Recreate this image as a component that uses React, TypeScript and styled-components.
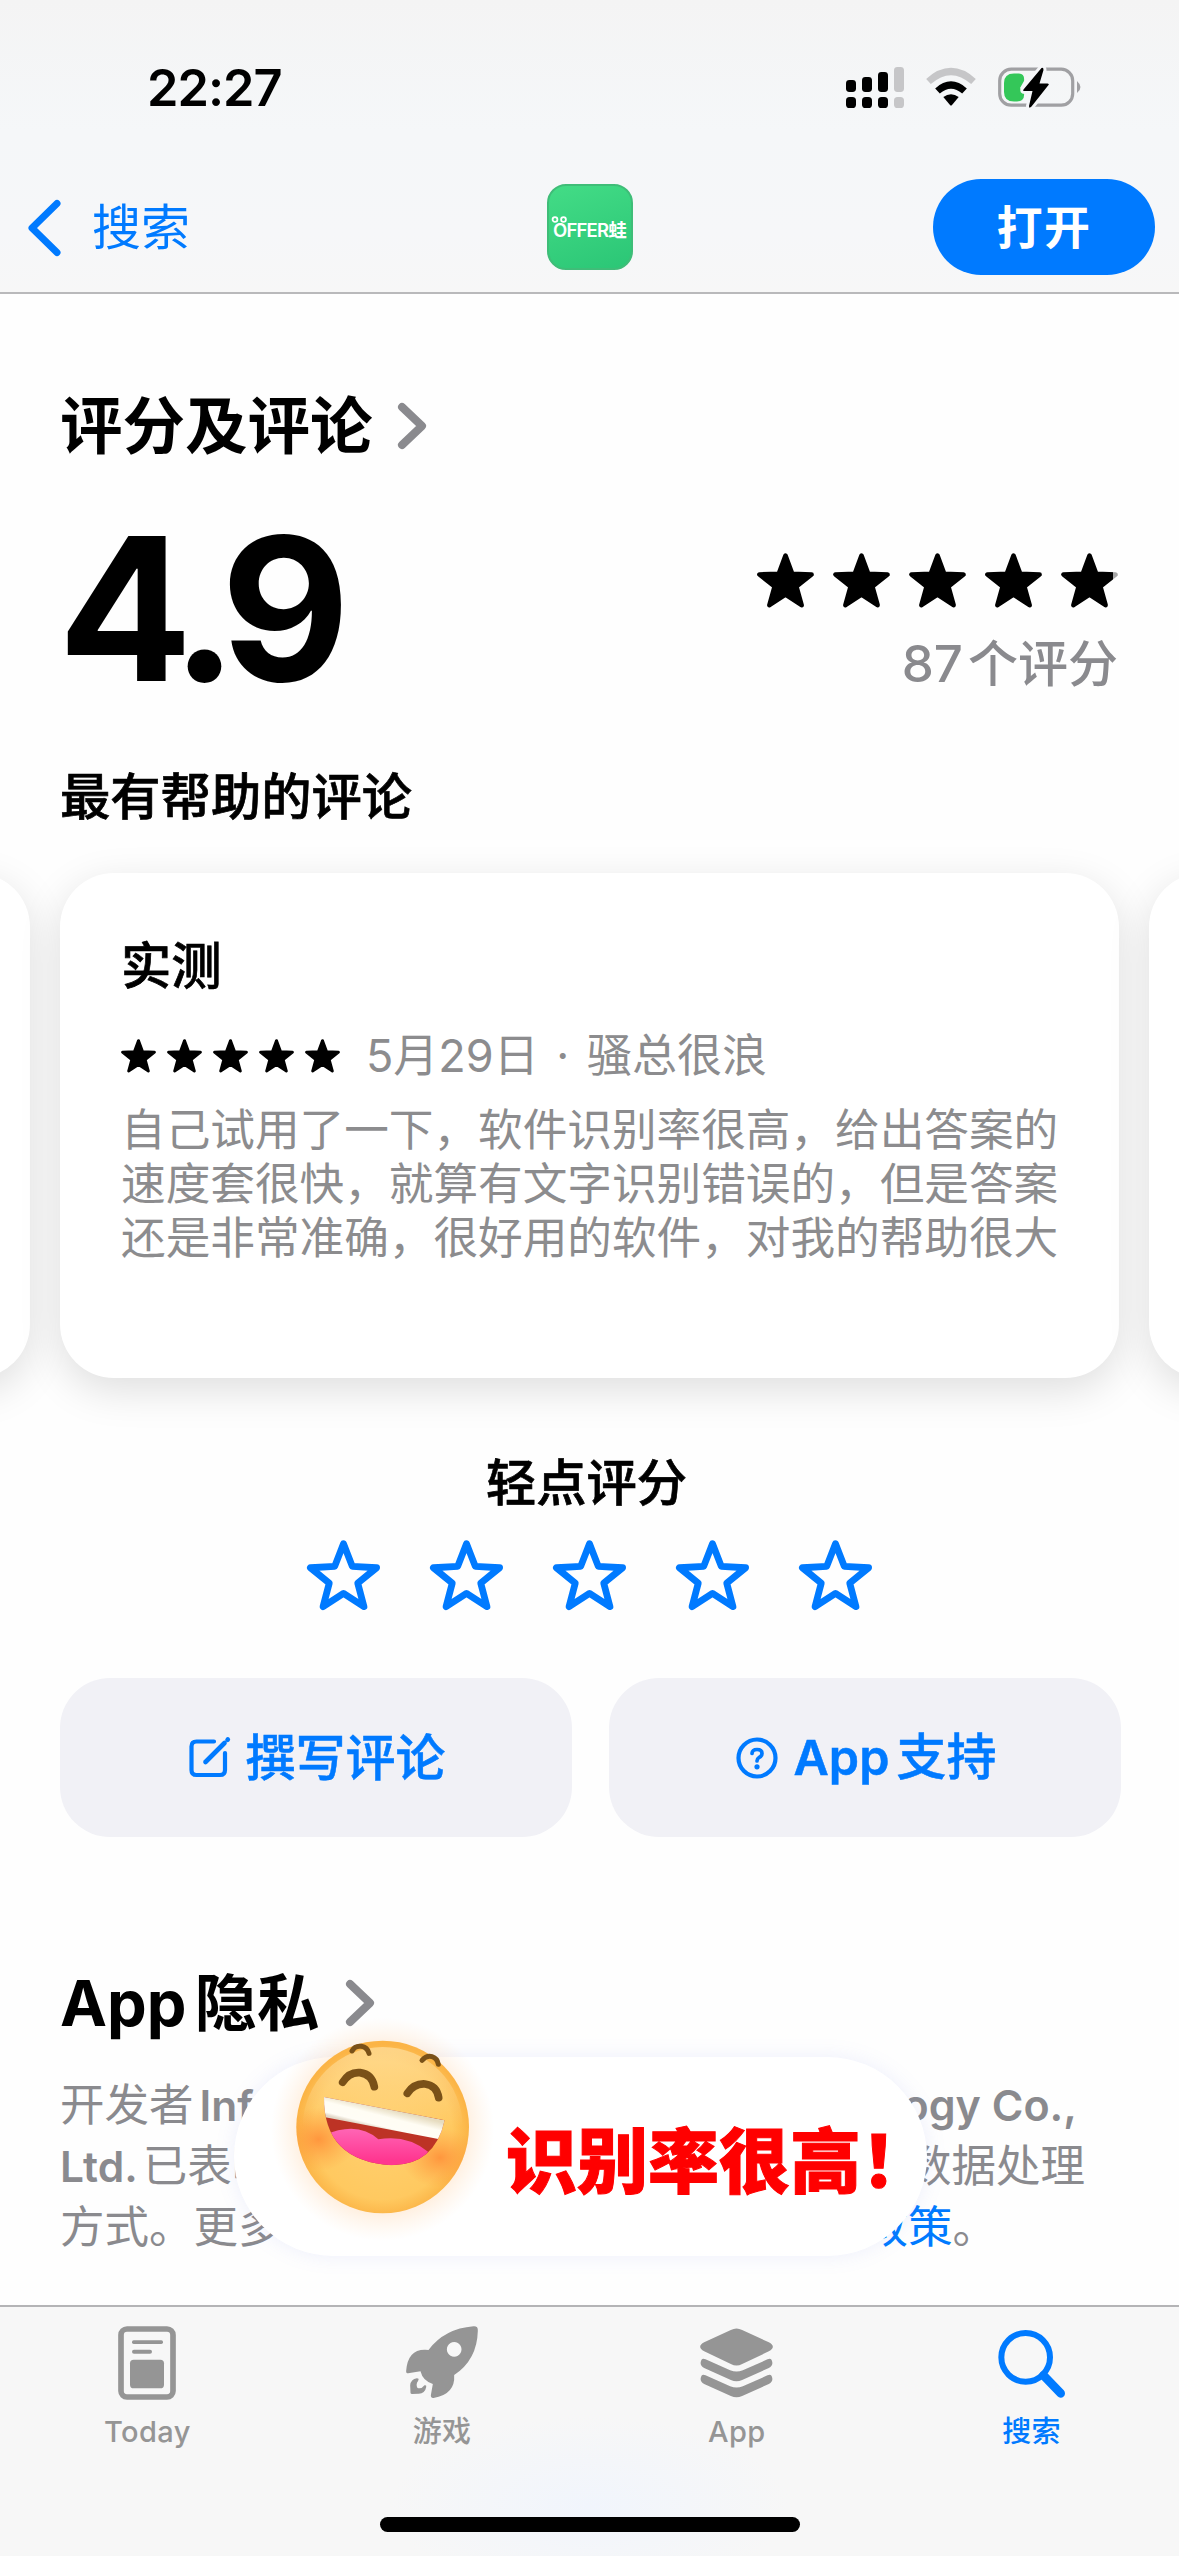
import React from "react";
import styled, { createGlobalStyle } from "styled-components";

const BLUE = "#007aff";
const GRAY = "#8a8a8e";
const TAB_GRAY = "#959595";

const GlobalStyle = createGlobalStyle`
  html, body { margin: 0; padding: 0; background: #fff; }
  * { box-sizing: border-box; }
  svg { display: block; flex: none; overflow: visible; }
  button { border: 0; padding: 0; margin: 0; background: none; font: inherit; color: inherit; }
  h2, h3, p { margin: 0; font-weight: inherit; }
`;

const Screen = styled.div`
  width: 1179px;
  height: 2556px;
  display: flex;
  flex-direction: column;
  overflow: hidden;
  background: #fefefe;
  color: #000;
  font-family: Inter, "Noto Sans CJK SC", sans-serif;
  white-space: nowrap;
`;

const Header = styled.header`
  flex: none;
  height: 294px;
  display: flex;
  flex-direction: column;
  background: linear-gradient(#f4f4f4, #f5f7f9 45%, #f6f7f9 80%, #f7f7f7);
  border-bottom: 2px solid #b9b9bb;
`;

const StatusBar = styled.div`
  height: 176px;
  display: flex;
  justify-content: space-between;
  padding: 0 98px 0 147px;
`;

const Clock = styled.time`
  line-height: 176px;
  font-size: 50.5px;
  font-weight: 600;
  letter-spacing: -1px;
`;

const StatusIcons = styled.div`
  display: flex;
  align-items: flex-start;
  padding-top: 66px;
  gap: 22px;
`;

const NavBar = styled.nav`
  height: 102px;
  display: grid;
  grid-template-columns: 1fr 86px 1fr;
  align-items: center;
`;

const BackLink = styled.button`
  display: flex;
  align-items: center;
  gap: 31px;
  padding: 1px 0 0 28px;
  color: ${BLUE};
  font-size: 49px;
  line-height: 60px;
`;

const AppIcon = styled.div`
  position: relative;
  width: 86px;
  height: 86px;
  border-radius: 19px;
  border: 2px solid #3fbd78;
  background: linear-gradient(160deg, #43dc86, #2bc676);
  display: flex;
  align-items: center;
  justify-content: center;
  padding-top: 5px;
  color: #fff;
  font-size: 18.5px;
  font-weight: 600;
  line-height: 20px;
  letter-spacing: -0.8px;
`;

const FrogEyes = styled.svg`
  position: absolute;
  left: 2px;
  top: 29px;
`;

const OpenButton = styled.button`
  justify-self: end;
  margin-right: 24px;
  width: 222px;
  height: 96px;
  border-radius: 48px;
  background: ${BLUE};
  color: #fff;
  font-size: 46px;
  font-weight: 600;
  line-height: 97px;
  letter-spacing: 1.5px;
`;

const Content = styled.main`
  flex: 1;
  min-height: 0;
  display: flex;
  flex-direction: column;
  padding: 84px 60px 0;
`;

const SectionTitle = styled.h2<{ $gap: number }>`
  height: 96px;
  display: flex;
  align-items: center;
  gap: ${(p) => p.$gap}px;
  font-size: 62.5px;
  font-weight: 700;
  line-height: 96px;
`;

const Latin = styled.span<{ $size: number; $gap: number; $weight?: number; $before?: number }>`
  font-size: ${(p) => p.$size}px;
  font-weight: ${(p) => p.$weight ?? 600};
  margin-left: ${(p) => p.$before ?? 0}px;
  margin-right: ${(p) => p.$gap}px;
`;

const Summary = styled.section`
  height: 292px;
  display: flex;
  justify-content: space-between;
`;

const Score = styled.div`
  margin-left: -2px;
  padding-top: 15px;
  font-size: 199px;
  font-weight: 700;
  line-height: 240px;
  letter-spacing: -14.5px;
`;

const Tally = styled.div`
  padding: 79px 1px 0 0;
  display: flex;
  flex-direction: column;
  align-items: flex-end;
  gap: 24px;
  color: ${GRAY};
  font-size: 50px;
  font-weight: 500;
  line-height: 60px;
`;

const StarRow = styled.div<{ $gap: number }>`
  display: flex;
  justify-content: center;
  gap: ${(p) => p.$gap}px;
`;

const Heading = styled.h3<{ $center?: boolean }>`
  height: 60px;
  padding-top: 1px;
  padding-right: ${(p) => (p.$center ? 6 : 0)}px;
  font-size: 50.3px;
  font-weight: 500;
  line-height: 60px;
  text-align: ${(p) => (p.$center ? "center" : "left")};
  -webkit-text-stroke: 0.7px #000;
`;

const Carousel = styled.section`
  margin: 47px -60px 0;
  display: flex;
  justify-content: center;
  gap: 30px;
`;

const ReviewCard = styled.article`
  flex: none;
  width: 1059px;
  height: 505px;
  border-radius: 54px;
  background: #fff;
  box-shadow: 0 12px 42px rgba(0, 0, 0, 0.13);
  padding: 62px 60px 0 61px;
`;

const ReviewMeta = styled.div`
  height: 54px;
  margin: 34px 0 20px;
  display: flex;
  align-items: center;
  gap: 26px;
  font-size: 45px;
  line-height: 54px;
  word-spacing: 5px;
  color: #8c8c8e;
`;

const ReviewBody = styled.p`
  font-size: 44.64px;
  line-height: 54px;
  color: #8c8c8e;
`;

const TapToRate = styled.section`
  margin-top: 74px;
  display: flex;
  flex-direction: column;
  gap: 28px;
`;

const Actions = styled.div`
  margin: 66px -2px 0 0;
  display: grid;
  grid-template-columns: 1fr 1fr;
  gap: 37px;
`;

const ActionButton = styled.button`
  height: 159px;
  border-radius: 50px;
  background: #f1f1f6;
  color: ${BLUE};
  display: flex;
  align-items: center;
  justify-content: center;
  gap: 16px;
  padding-left: 2px;
  font-size: 50px;
  font-weight: 500;
  line-height: 60px;
  -webkit-text-stroke: 0.5px ${BLUE};
`;

const Privacy = styled.section`
  position: relative;
  margin-top: 118px;
`;

const PolicyText = styled.div`
  margin-top: 24px;
  width: 1025px;
  color: ${GRAY};
  font-size: 44.5px;
  line-height: 60px;
`;

const PolicyLine = styled.div<{ $inset?: number }>`
  display: flex;
  justify-content: space-between;
  padding-right: ${(p) => p.$inset ?? 0}px;
`;

const PolicyLink = styled.span`
  color: ${BLUE};
`;

const Toast = styled.aside`
  position: absolute;
  left: 174px;
  top: 102px;
  width: 693px;
  height: 199px;
  border-radius: 100px;
  background: #fff;
  box-shadow: 0 0 20px rgba(120, 140, 230, 0.13);
  display: flex;
  align-items: center;
  color: #ff0000;
  font-family: "Noto Sans CJK SC", sans-serif;
  font-size: 71px;
  font-weight: 900;
  line-height: 90px;
`;

const ToastFace = styled.svg`
  margin: -62px 0 0 36px;
`;

const ToastLabel = styled.span`
  margin: -2px 0 0 6px;
  -webkit-text-stroke: 1px #ff0000;
  font-feature-settings: "halt";
`;

const TabBar = styled.footer`
  flex: none;
  height: 251px;
  border-top: 2px solid #b4b4b6;
  background: radial-gradient(ellipse 200px 90px at 50% 80%, #f1f5fc, #f7f7f7);
  display: flex;
  flex-direction: column;
  align-items: center;
`;

const Tabs = styled.div`
  width: 1179px;
  height: 210px;
  display: grid;
  grid-template-columns: repeat(4, 1fr);
`;

const Tab = styled.button<{ $active?: boolean }>`
  display: flex;
  flex-direction: column;
  align-items: center;
  justify-content: flex-start;
  padding-top: 19px;
  gap: 14px;
  color: ${(p) => (p.$active ? BLUE : TAB_GRAY)};
  font-size: 29px;
  font-weight: 500;
  line-height: 36px;
  letter-spacing: 0.4px;
`;

const HomeIndicator = styled.div`
  width: 420px;
  height: 15px;
  border-radius: 8px;
  background: #000;
`;

function starPoints(cx: number, cy: number, r: number, ratio: number) {
  return Array.from({ length: 10 }, (_, i) => {
    const a = (Math.PI / 5) * i - Math.PI / 2;
    const d = i % 2 ? r * ratio : r;
    return `${(cx + d * Math.cos(a)).toFixed(2)},${(cy + d * Math.sin(a)).toFixed(2)}`;
  }).join(" ");
}

function SolidStar({ size, partial }: { size: number; partial?: boolean }) {
  const fill = partial ? "url(#partial-star)" : "#000";
  return (
    <svg width={size} height={size} viewBox="0 0 57 57">
      <defs>
        <linearGradient id="partial-star" gradientUnits="userSpaceOnUse" x1="0" x2="57" y1="0" y2="0">
          <stop offset="0.92" stopColor="#000" />
          <stop offset="0.92" stopColor="#a5a5a5" />
        </linearGradient>
      </defs>
      <polygon points={starPoints(28.5, 30, 27.4, 0.42)} fill={fill} stroke={fill} strokeWidth="4.6" strokeLinejoin="round" />
    </svg>
  );
}

function OutlineStar() {
  return (
    <svg width="73" height="72" viewBox="0 0 73 72">
      <polygon points={starPoints(36.5, 38.5, 34.8, 0.43)} fill="none" stroke={BLUE} strokeWidth="6.8" strokeLinejoin="round" />
    </svg>
  );
}

function Chevron() {
  return (
    <svg width="30" height="48" viewBox="0 0 30 48" fill="none" stroke={GRAY} strokeWidth="8" strokeLinecap="round" strokeLinejoin="round">
      <path d="M5 5 L25 24 L5 43" />
    </svg>
  );
}

function BackChevron() {
  return (
    <svg width="33" height="58" viewBox="0 0 33 58" fill="none" stroke={BLUE} strokeWidth="7" strokeLinecap="round" strokeLinejoin="round">
      <path d="M29 4.5 L4 29 L29 53.5" />
    </svg>
  );
}

function Signal() {
  const bars = [14, 11, 6, 1];
  return (
    <svg width="58" height="42" viewBox="0 0 58 42">
      {bars.map((top, i) => (
        <g key={top} fill={i === 3 ? "#c6c6c8" : "#000"}>
          <rect x={i * 16} y={top} width="10" height={26 - top} rx="3.4" />
          <rect x={i * 16} y="31" width="10" height="11" rx="3.6" />
        </g>
      ))}
    </svg>
  );
}

function Wifi() {
  return (
    <svg width="50" height="40" viewBox="0 0 50 40" fill="none">
      <path d="M2.5 15.5 Q25 -4.5 47.5 15.5" stroke="#c6c6c8" strokeWidth="7" />
      <path d="M11.5 25 Q25 13 38.5 25" stroke="#000" strokeWidth="7" />
      <path d="M17.3 31 Q25 25.5 32.7 31 L26 39 Q25 40 24 39 Z" fill="#000" />
    </svg>
  );
}

function Battery() {
  return (
    <svg width="83" height="42" viewBox="0 0 83 42">
      <rect x="1.7" y="3.2" width="73" height="36" rx="11.5" fill="none" stroke="#a0a0a3" strokeWidth="3.2" />
      <path d="M16 7.500 H21 Q27 8 26 15 L22 22 L26 27 Q27 35 19 35.500 H16 Q6 35.500 6 26 V17 Q6 7.500 16 7.500Z" fill="#34c759" />
      <path d="M79 15 Q86 21.500 79 27Z" fill="#a0a0a3" />
      <path d="M43.500 2 L25.500 23.500 Q24.500 25 26.500 25 H34.500 L31 40 Q31 43 33.500 40.500 L50.500 19 Q51.500 17.500 49.500 17.500 H41.500 L45.500 4 Q45.500 1 43.500 2Z" fill="#000" stroke="#f5f6f8" strokeWidth="6" paintOrder="stroke" />
    </svg>
  );
}

function ComposeIcon() {
  return (
    <svg width="41" height="41" viewBox="0 0 41 41" fill="none" stroke={BLUE} strokeWidth="4.200" strokeLinecap="round" strokeLinejoin="round">
      <path d="M25 4.500 H7.500 Q2.500 4.500 2.500 9.500 V33 Q2.500 38 7.500 38 H31 Q36 38 36 33 V16" />
      <path d="M16.500 25 L35.500 6" strokeWidth="4.600" />
      <path d="M38.500 2.800 L38.800 2.500" strokeWidth="4.600" />
    </svg>
  );
}

function HelpIcon() {
  return (
    <svg width="42" height="42" viewBox="0 0 42 42" fill="none" stroke={BLUE} strokeWidth="4.200" strokeLinecap="round">
      <circle cx="21" cy="21" r="18.500" />
      <path d="M16 16.500 Q16.300 12.500 21 12.500 Q26 12.500 26 16.400 Q26 18.800 23.300 20.300 Q21 21.800 21 24" strokeWidth="3.700" />
      <circle cx="21" cy="29.800" r="2.600" fill={BLUE} stroke="none" />
    </svg>
  );
}

function TodayIcon() {
  return (
    <svg width="58" height="74" viewBox="0 0 174 222" fill={TAB_GRAY}>
      <rect x="9" y="9" width="156" height="204" rx="18" fill="none" stroke={TAB_GRAY} strokeWidth="17" />
      <rect x="42" y="43" width="93" height="11" rx="5" />
      <rect x="42" y="71" width="60" height="12" rx="6" />
      <rect x="36" y="101" width="102" height="86" rx="11" />
    </svg>
  );
}

function RocketIcon() {
  return (
    <svg width="73" height="74" viewBox="0 0 218 222" fill={TAB_GRAY}>
      <path
        fillRule="evenodd"
        d="M202 1 Q216 0 215 14 Q213 101 144 147 Q148 205 82 216 Q74 217 74 208 L80 174 Q50 165 43 136 L6 142 Q-1 142 0 134 Q5 70 57 71 Q66 71 67 72 Q115 8 202 1Z M144 48 a22 22 0 1 0 0.100 0Z"
      />
      <path d="M13 200 L12 178 Q14 160 32 157 Q40 157 36 164 Q28 174 34 186 Q46 190 55 178 Q62 176 60 184 Q56 204 36 203 L18 204 Q13 204 13 200Z" />
    </svg>
  );
}

function StackIcon() {
  const layer =
    "M4 95 Q8 90 16 94 L90 127 Q109 134 128 127 L202 94 Q210 90 214 95 Q222 112 206 120 L126 156 Q109 164 92 156 L12 120 Q-4 112 4 95Z";
  return (
    <svg width="73" height="74" viewBox="0 -6 218 222" fill={TAB_GRAY}>
      <path d="M92 6 Q109 -3 126 6 L206 43 Q230 56 206 70 L126 108 Q109 117 92 108 L12 70 Q-12 56 12 43Z" />
      <path d={layer} />
      <path d={layer} transform="translate(0 48)" />
    </svg>
  );
}

function SearchIcon() {
  return (
    <svg width="68" height="74" viewBox="0 -12 204 222" fill="none" stroke={BLUE} strokeLinecap="round">
      <circle cx="83" cy="82" r="73" strokeWidth="18" />
      <path d="M136 136 L188 190" strokeWidth="26" />
    </svg>
  );
}

function LaughingFace() {
  return (
    <ToastFace width="230" height="210" viewBox="0 0 690 630">
      <defs>
        <radialGradient id="face" cx="0.5" cy="0.52" r="0.5">
          <stop offset="0" stopColor="#ffd070" />
          <stop offset="0.8" stopColor="#ffc960" />
          <stop offset="1" stopColor="#fbb446" />
        </radialGradient>
        <linearGradient id="shine" x1="0" x2="0" y1="0" y2="1">
          <stop offset="0" stopColor="#ffe0a0" stopOpacity="0.7" />
          <stop offset="0.5" stopColor="#ffe0a0" stopOpacity="0" />
        </linearGradient>
        <radialGradient id="blush">
          <stop offset="0" stopColor="#ff8a35" stopOpacity="0.8" />
          <stop offset="1" stopColor="#ff9a3c" stopOpacity="0" />
        </radialGradient>
        <radialGradient id="glow">
          <stop offset="0.68" stopColor="#ffb870" stopOpacity="0.3" />
          <stop offset="1" stopColor="#ffd0a0" stopOpacity="0" />
        </radialGradient>
        <linearGradient id="teeth" gradientUnits="userSpaceOnUse" x1="350" y1="262" x2="334" y2="325">
          <stop offset="0" stopColor="#e6dcc0" />
          <stop offset="0.4" stopColor="#fffdf4" />
          <stop offset="0.85" stopColor="#fffdf6" />
          <stop offset="1" stopColor="#e2d8c8" />
        </linearGradient>
        <linearGradient id="tongue" x1="0" x2="0" y1="0" y2="1">
          <stop offset="0" stopColor="#ff65b5" />
          <stop offset="0.75" stopColor="#ff3690" />
        </linearGradient>
        <clipPath id="disc">
          <circle cx="338" cy="318" r="259" />
        </clipPath>
        <clipPath id="mouth">
          <path d="M162 228 L524 298 Q494 432 365 433 Q160 420 162 228Z" />
        </clipPath>
      </defs>
      <circle cx="338" cy="325" r="335" fill="url(#glow)" />
      <circle cx="338" cy="318" r="259" fill="url(#face)" />
      <circle cx="338" cy="318" r="240" fill="url(#shine)" />
      <g clipPath="url(#disc)">
        <ellipse cx="145" cy="355" rx="115" ry="95" fill="url(#blush)" />
        <ellipse cx="510" cy="410" rx="115" ry="90" fill="url(#blush)" />
      </g>
      <g clipPath="url(#mouth)">
        <rect x="150" y="220" width="390" height="220" fill="#bd3325" />
        <path d="M150 348 Q260 295 325 355 Q410 340 474 392 L450 450 H200Z" fill="url(#tongue)" />
        <path d="M155 220 L535 300 L505 354 L155 287Z" fill="url(#teeth)" />
      </g>
      <g fill="none" stroke="#7a5118" strokeLinecap="round">
        <path d="M218 184 Q238 152 270 155 Q306 160 313 197" strokeWidth="23" />
        <path d="M412 217 Q432 187 465 189 Q500 193 506 230" strokeWidth="23" />
        <path d="M246 90 Q255 73 274 76 Q292 79 297 97" strokeWidth="15" />
        <path d="M456 118 Q470 102 486 107 Q502 112 505 130" strokeWidth="15" />
      </g>
    </ToastFace>
  );
}

const reviewLines = [
  "自己试用了一下，软件识别率很高，给出答案的",
  "速度套很快，就算有文字识别错误的，但是答案",
  "还是非常准确，很好用的软件，对我的帮助很大",
];

const tabs = [
  { label: "Today", icon: <TodayIcon /> },
  { label: "游戏", icon: <RocketIcon /> },
  { label: "App", icon: <StackIcon /> },
  { label: "搜索", icon: <SearchIcon />, active: true },
];

const five = [0, 1, 2, 3, 4];

export default function App() {
  return (
    <Screen>
      <GlobalStyle />
      <Header>
        <StatusBar>
          <Clock>22:27</Clock>
          <StatusIcons>
            <Signal />
            <Wifi />
            <Battery />
          </StatusIcons>
        </StatusBar>
        <NavBar>
          <BackLink>
            <BackChevron />
            搜索
          </BackLink>
          <AppIcon>
            <FrogEyes width="16" height="9" viewBox="0 0 16 9" fill="none" stroke="#fff" strokeWidth="1.800">
              <circle cx="4" cy="4.500" r="2.400" />
              <circle cx="12.500" cy="4.500" r="2.400" />
            </FrogEyes>
            OFFER蛙
          </AppIcon>
          <OpenButton>打开</OpenButton>
        </NavBar>
      </Header>

      <Content>
        <SectionTitle $gap={24}>
          评分及评论
          <Chevron />
        </SectionTitle>
        <Summary>
          <Score>4.9</Score>
          <Tally>
            <StarRow $gap={19}>
              {five.map((i) => (
                <SolidStar key={i} size={57} partial={i === 4} />
              ))}
            </StarRow>
            <span>
              <Latin $size={51} $gap={5} $weight={500}>87</Latin>个评分
            </span>
          </Tally>
        </Summary>
        <Heading>最有帮助的评论</Heading>
        <Carousel>
          <ReviewCard />
          <ReviewCard>
            <Heading>实测</Heading>
            <ReviewMeta>
              <StarRow $gap={11}>
                {five.map((i) => (
                  <SolidStar key={i} size={35} />
                ))}
              </StarRow>
              <span>5月29日 · 骚总很浪</span>
            </ReviewMeta>
            <ReviewBody>
              {reviewLines.map((line) => (
                <React.Fragment key={line}>
                  {line}
                  <br />
                </React.Fragment>
              ))}
            </ReviewBody>
          </ReviewCard>
          <ReviewCard />
        </Carousel>

        <TapToRate>
          <Heading $center>轻点评分</Heading>
          <StarRow $gap={50}>
            {five.map((i) => (
              <OutlineStar key={i} />
            ))}
          </StarRow>
        </TapToRate>

        <Actions>
          <ActionButton>
            <ComposeIcon />
            撰写评论
          </ActionButton>
          <ActionButton>
            <HelpIcon />
            <span>
              <Latin $size={48.5} $gap={7}>App</Latin>支持
            </span>
          </ActionButton>
        </Actions>

        <Privacy>
          <SectionTitle $gap={26}>
            <span>
              <Latin $size={63} $gap={8} $weight={700}>App</Latin>隐私
            </span>
            <Chevron />
          </SectionTitle>
          <PolicyText>
            <PolicyLine $inset={8}>
              <span>开发者<Latin $size={42.5} $before={6} $gap={0}>Inf</Latin></span>
              <Latin $size={43} $gap={0}>ogy Co.,</Latin>
            </PolicyLine>
            <PolicyLine>
              <span><Latin $size={42.5} $gap={5}>Ltd.</Latin>已表明</span>
              <span>数据处理</span>
            </PolicyLine>
            <PolicyLine $inset={88}>
              <span>方式。更多</span>
              <span><PolicyLink>政策</PolicyLink>。</span>
            </PolicyLine>
          </PolicyText>
          <Toast>
            <LaughingFace />
            <ToastLabel>识别率很高！</ToastLabel>
          </Toast>
        </Privacy>
      </Content>

      <TabBar>
        <Tabs>
          {tabs.map((tab) => (
            <Tab key={tab.label} $active={tab.active}>
              {tab.icon}
              {tab.label}
            </Tab>
          ))}
        </Tabs>
        <HomeIndicator />
      </TabBar>
    </Screen>
  );
}
